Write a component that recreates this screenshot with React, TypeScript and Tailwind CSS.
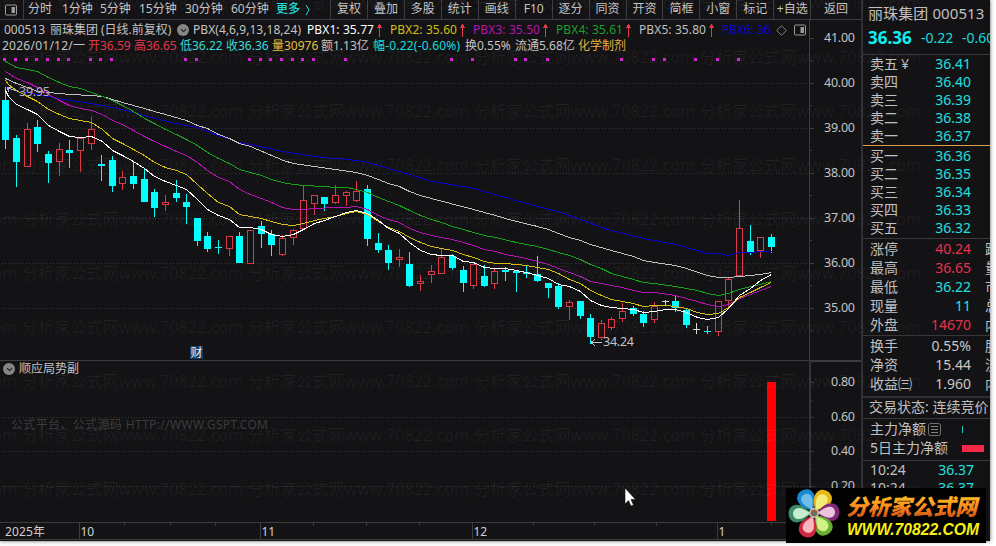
import { ChevronDown } from "lucide-react";

type Kind = "up" | "down" | "flat";
type Candle = [Kind, number, number, number, number];

// kind, high, body top, body bottom, low
const CANDLES: Candle[] = [
  ["down", 86, 100, 140, 149], ["down", 135, 138, 162, 187], ["up", 123, 129, 167, 167], ["down", 120, 127, 144, 152],
  ["down", 151, 154, 163, 183], ["up", 143, 149, 162, 176], ["down", 140, 150, 153, 168], ["up", 137, 138, 151, 172],
  ["up", 117, 129, 144, 150], ["down", 155, 164, 166, 181], ["down", 156, 160, 186, 192], ["up", 171, 177, 184, 190],
  ["down", 161, 176, 184, 189], ["down", 168, 179, 202, 202], ["down", 189, 192, 208, 217], ["up", 195, 202, 205, 211],
  ["down", 180, 193, 198, 202], ["down", 194, 202, 207, 224], ["down", 218, 218, 241, 246], ["down", 232, 236, 249, 252],
  ["down", 240, 247, 248, 254], ["up", 236, 236, 249, 256], ["down", 232, 236, 263, 263], ["up", 230, 230, 264, 264],
  ["down", 221, 226, 234, 248], ["down", 230, 234, 245, 256], ["up", 235, 238, 255, 256], ["up", 229, 230, 238, 245],
  ["up", 186, 200, 229, 229], ["up", 195, 195, 204, 215], ["down", 197, 197, 204, 211], ["up", 185, 195, 203, 204],
  ["up", 191, 192, 196, 206], ["up", 181, 191, 201, 202], ["down", 185, 189, 239, 246], ["down", 233, 243, 250, 253],
  ["down", 245, 250, 263, 270], ["up", 249, 257, 260, 267], ["down", 252, 264, 286, 287], ["up", 275, 281, 284, 291],
  ["up", 265, 271, 275, 283], ["up", 248, 257, 274, 274], ["down", 254, 256, 268, 270], ["down", 266, 270, 283, 292],
  ["up", 264, 264, 286, 289], ["down", 265, 276, 286, 287], ["up", 268, 271, 284, 289], ["down", 267, 270, 272, 281],
  ["down", 270, 271, 273, 292], ["down", 266, 272, 274, 278], ["down", 256, 274, 281, 282], ["down", 283, 283, 288, 298],
  ["down", 283, 286, 307, 309], ["up", 300, 302, 307, 320], ["down", 301, 301, 316, 319], ["down", 314, 318, 337, 344],
  ["up", 320, 323, 338, 340], ["up", 317, 319, 328, 330], ["up", 303, 311, 319, 322], ["down", 306, 308, 314, 316],
  ["down", 311, 314, 323, 327], ["up", 302, 306, 320, 323], ["flat", 300, 301, 302, 305], ["down", 295, 301, 308, 312],
  ["down", 308, 310, 325, 328], ["flat", 323, 329, 330, 334], ["down", 326, 331, 332, 334], ["up", 301, 301, 332, 336],
  ["up", 277, 279, 301, 307], ["up", 200, 228, 276, 276], ["down", 225, 241, 252, 255], ["up", 237, 237, 251, 258],
  ["down", 234, 237, 247, 253],
];

const LINES = [
  { color: "#0a00d0", points: "5,86 10,89 20,91 37,94 48,96 69,100 91,103 112,107 133,112 154,118 176,123 197,127 218,135 239,142 250,144 282,151 314,156 335,158 357,160 367,162 378,165 388,168 409,174 431,181 450,184 473,188 505,197 537,206 560,212 583,220 601,227 611,230 643,238 675,244 697,250 707,253 718,253 728,255 739,252 771,251" },
  { color: "#c0c0c0", points: "5,78 16,83 27,87 37,91 48,92 59,93 69,94 91,95 102,96 112,99 122,102 133,105 144,108 154,111 165,114 186,120 197,125 207,128 218,134 229,138 239,143 250,146 283,160 293,163 314,166 335,169 356,172 367,175 378,179 388,183 399,186 409,191 420,195 431,198 450,203 473,209 495,215 512,220 537,226 548,229 558,233 569,237 580,240 590,244 611,250 633,256 643,260 654,262 675,265 686,268 707,275 718,277 728,277 739,276 750,275 760,274 771,272" },
  { color: "#18a018", points: "5,61 16,67 27,69 37,71 48,77 59,82 69,86 80,88 91,92 102,96 112,100 122,105 133,111 144,118 154,123 165,129 176,134 186,139 197,145 207,152 218,158 229,163 239,169 250,172 261,175 271,179 282,182 293,184 303,185 324,186 335,187 346,187 356,189 367,192 378,197 388,201 399,205 409,210 420,215 431,219 441,222 452,226 463,229 473,232 484,235 495,237 516,242 526,244 537,246 548,249 558,252 569,255 580,259 590,264 601,268 611,273 622,276 633,279 643,282 654,283 675,286 686,288 697,290 707,293 718,295 728,293 739,289 750,286 760,284 771,281" },
  { color: "#b414b4", points: "5,71 16,78 27,82 37,87 48,94 59,100 69,105 80,108 91,110 102,114 112,120 122,124 133,130 144,136 154,141 165,146 176,151 186,155 197,162 207,170 218,177 229,181 239,189 250,194 261,198 271,202 282,207 293,209 303,209 314,208 335,207 346,207 356,206 367,209 378,215 388,219 399,222 409,228 420,232 431,235 441,237 452,239 463,242 473,245 484,249 495,251 505,254 516,256 526,258 537,261 548,264 558,268 569,272 580,276 590,281 601,283 611,285 622,287 633,290 643,292 654,292 675,295 686,298 697,301 707,304 718,306 728,304 739,298 750,294 760,290 771,286" },
  { color: "#d4be10", points: "5,80 8,84 16,90 27,96 37,101 48,109 59,114 69,118 80,120 91,122 102,129 112,138 122,143 133,149 144,155 154,162 165,167 176,170 186,174 197,184 207,193 218,202 229,206 239,214 250,216 261,218 271,221 282,224 293,225 303,223 314,220 324,218 335,216 346,213 356,211 367,214 378,221 388,227 399,231 409,237 420,242 431,246 441,248 452,250 463,254 473,257 484,261 495,263 505,263 516,264 526,265 537,267 548,269 558,273 569,279 580,283 590,290 601,295 611,299 622,301 633,303 643,306 654,305 665,305 675,306 686,308 697,312 707,314 718,313 728,307 739,297 750,292 760,287 771,282" },
  { color: "#ffffff", points: "5,90 8,96 16,104 27,109 37,114 48,125 59,131 69,136 80,137 91,136 102,141 112,150 122,155 133,161 144,168 154,176 165,181 176,185 186,189 197,199 207,209 218,215 229,219 239,227 250,227 261,229 271,234 282,236 293,234 303,229 314,223 324,220 335,216 346,212 356,210 367,213 378,220 388,228 399,233 409,242 420,250 431,254 441,255 452,255 463,261 473,262 484,267 495,268 505,268 516,270 526,272 537,275 548,278 558,284 569,286 580,291 590,300 601,305 611,307 622,308 633,309 643,312 654,311 665,309 675,309 686,312 697,317 707,319 718,317 728,308 739,295 750,288 760,280 771,274" },
];

const MARKERS = [0, 1, 2, 3, 4, 5, 6, 8, 9, 10, 17, 18, 23, 24, 25, 26, 27, 28, 29, 32, 42, 44, 48, 49, 51, 58, 61, 62, 65, 67, 69];

const PERIODS = [
  ["分时", "w-[34px]"], ["1分钟", "w-[38px]"], ["5分钟", "w-[39px]"], ["15分钟", "w-[46px]"],
  ["30分钟", "w-[46px]"], ["60分钟", "w-[45px]"],
];

const ACTIONS = ["复权", "叠加", "多股", "统计", "画线", "F10", "逐分", "同资", "开资", "简框", "小窗", "标记", "+自选"];

const INDICATORS = [
  ["PBX1: 35.77", "text-white"],
  ["PBX2: 35.60", "text-[#d0c018]"],
  ["PBX3: 35.50", "text-[#b414b4]"],
  ["PBX4: 35.61", "text-[#1ca02c]"],
  ["PBX5: 35.80", "text-[#c0c0c0]"],
];

const QUOTE = [
  ["2026/01/12/一", "w-[86px] tracking-[0.25px] text-[#c4c4c4]"],
  ["开36.59", "w-[46px] text-[#e0384c]"],
  ["高36.65", "w-[46px] text-[#e0384c]"],
  ["低36.22", "w-[46px] text-[#38dcdc]"],
  ["收36.36", "w-[46px] text-[#38dcdc]"],
  ["量30976", "w-[49px] text-[#e8c040]"],
  ["额1.13亿", "w-[52px] text-[#c4c4c4]"],
  ["幅-0.22(-0.60%)", "w-[92px] tracking-[0.2px] text-[#18dcdc]"],
  ["换0.55%", "w-[50px] text-[#c4c4c4]"],
  ["流通5.68亿", "w-[63px] text-[#c4c4c4]"],
  ["化学制剂", "text-[#e8b040]"],
];

const ASKS = [["卖五", "36.41"], ["卖四", "36.40"], ["卖三", "36.39"], ["卖二", "36.38"], ["卖一", "36.37"]];
const BIDS = [["买一", "36.36"], ["买二", "36.35"], ["买三", "36.34"], ["买四", "36.33"], ["买五", "36.32"]];

const STATS = [
  ["涨停", "40.24", "跌", "text-[#e8304c]"],
  ["最高", "36.65", "量", "text-[#e8304c]"],
  ["最低", "36.22", "市", "text-[#20e0e0]"],
  ["现量", "11", "总", "text-[#20e0e0]"],
  ["外盘", "14670", "内", "text-[#e8304c]"],
];

const FUNDAMENTALS = [
  ["换手", "0.55%", "股", "text-[#c8c8c8]"],
  ["净资", "15.44", "流", "text-[#c8c8c8]"],
  ["收益㈢", "1.960", "内", "text-[#c8c8c8]"],
];

const barX = (i: number) => Math.ceil(5 + i * 10.63);

function PanelIcon() {
  return (
    <svg width="12" height="12" viewBox="0 0 12 12" className="shrink-0">
      <rect x="0.5" y="1" width="11" height="10" rx="1" fill="none" stroke="#9a9a9a" />
      <rect x="6.5" y="3" width="3.5" height="6" fill="#9a9a9a" />
    </svg>
  );
}

function Badge() {
  return (
    <span className="flex size-[12px] shrink-0 items-center justify-center rounded-full bg-[#868686]">
      <ChevronDown size={9} strokeWidth={3} color="#202022" />
    </span>
  );
}

function Toolbar() {
  return (
    <div className="flex h-5 shrink-0 items-center border-b border-[#3c3c40] text-[12px] text-[#c4c4c4]">
      <div className="flex h-full w-6 shrink-0 items-center border-r border-[#3c3c40] pl-[5px]">
        <PanelIcon />
      </div>
      <div className="flex w-[306px] shrink-0 pb-[2px] pl-[4px]">
        {PERIODS.map(([label, width]) => (
          <span key={label} className={`${width} shrink-0`}>{label}</span>
        ))}
        <span className="font-medium text-[#20dcdc]">更多</span>
        <svg width="6" height="12" viewBox="0 0 6 12" className="mt-[4px] ml-[5px]">
          <path d="M1 1 L4 6 L1 11" fill="none" stroke="#20dcdc" />
        </svg>
      </div>
      {ACTIONS.map((label) => (
        <span key={label} className="flex h-full w-[36.95px] shrink-0 items-center justify-center border-l border-[#3c3c40] pb-[2px] whitespace-nowrap">
          {label}
        </span>
      ))}
      <span className="flex h-full flex-1 items-center justify-center border-l border-[#3c3c40] pb-[2px]">返回</span>
    </div>
  );
}

function PriceChart() {
  return (
    <svg width="810" height="340" viewBox="0 20 810 340" shapeRendering="crispEdges" className="col-start-1 row-start-1">
      {[83, 128, 173, 218, 263, 308].map((y) => (
        <line key={y} x1="2" x2="809" y1={y + 0.5} y2={y + 0.5} stroke="#363638" strokeDasharray="1 2" />
      ))}
      {MARKERS.map((i) => (
        <rect key={i} x={barX(i) - 2} y="58" width="3" height="3" fill="#d820d8" />
      ))}
      {CANDLES.map(([kind, high, top, bottom, low], i) => {
        const x = barX(i);
        const color = kind === "up" ? "#dc3848" : kind === "down" ? "#00ffff" : "#d8d8d8";
        const doji = bottom - top <= 1;
        return (
          <g key={i} fill={color}>
            <rect x={x} y={high} width="1" height={Math.max(top - high, 0)} />
            <rect x={x} y={bottom} width="1" height={Math.max(low - bottom, 0)} />
            {kind === "up" ? (
              <rect x={x - 2.5} y={top + 0.5} width="6" height={bottom - top - 1} fill="none" stroke={color} />
            ) : (
              <rect x={x - 3} y={top} width="7" height={doji ? 1 : bottom - top} />
            )}
          </g>
        );
      })}
      {LINES.map((line) => (
        <polyline key={line.color} points={line.points} fill="none" stroke={line.color} transform="translate(0.5 0.5)" />
      ))}
      <path d="M7 87.5 L18 91.5 M7 87.5 h5 M7 87.5 l2 4" stroke="#b8b8c8" fill="none" />
      <text x="19" y="96" fontSize="12.5" fill="#b0b0c0" textLength="31">39.95</text>
      <path d="M591 342.5 h11 M591 342.5 l4 -3 M591 342.5 l4 3" stroke="#c4c4c4" fill="none" />
      <text x="603" y="346" fontSize="12.5" fill="#c4c4c4" textLength="31">34.24</text>
      <rect x="190" y="346" width="13" height="13" fill="#103c68" />
      <text x="190.5" y="357" fontSize="12" fill="#f0f0f0">财</text>
    </svg>
  );
}

function PriceAxis() {
  return (
    <svg width="51" height="340" viewBox="810 20 51 340" shapeRendering="crispEdges">
      {["41.00", "40.00", "39.00", "38.00", "37.00", "36.00", "35.00"].map((label, i) => (
        <g key={label}>
          <rect x="810" y={38 + i * 45} width="4" height="1" fill="#3c3c40" />
          <rect x="810" y={60 + i * 45} width="2" height="1" fill="#3c3c40" />
          <text x="824" y={42 + i * 45} fontSize="12.5" fill="#c4c4c4" textLength="31">{label}</text>
        </g>
      ))}
    </svg>
  );
}

function MainPane() {
  return (
    <div className="flex h-[341px] shrink-0 border-b border-[#3c3c40]">
      <div className="grid w-[810px] shrink-0 border-r border-[#3c3c40]">
        <PriceChart />
        <div className="col-start-1 row-start-1 overflow-hidden text-[12px] leading-[16px] whitespace-nowrap">
          <div className="flex items-center pt-[2px] pl-[4px] text-[#c4c4c4]">
            <span className="w-[46px] shrink-0">000513</span>
            <span className="w-[127px] shrink-0">丽珠集团<span className="ml-[3px]">(日线.前复权)</span></span>
            <Badge />
            <span className="ml-[4px] w-[114px] shrink-0 tracking-[0.05px]">PBX(4,6,9,13,18,24)</span>
            {INDICATORS.map(([label, color]) => (
              <span key={label} className={`flex w-[83px] shrink-0 items-center ${color}`}>
                <span className="w-[69px] shrink-0 tracking-[0.1px]">{label}</span>
                <svg width="7" height="14" viewBox="0 0 7 14" shapeRendering="crispEdges" className="shrink-0">
                  <path d="M3 1 h1 v13 h-1 Z M3 1 h1 v1 h1 v2 h1 v1 h-5 v-1 h1 v-2 h1 Z" fill="#e0384c" />
                </svg>
              </span>
            ))}
            <span className="w-[54px] shrink-0 overflow-hidden tracking-[-0.1px] text-[#0c04d8]">PBX6: 36.</span>
            <svg width="11" height="11" viewBox="0 0 11 11" className="shrink-0">
              <path d="M5.5 0.7 L10.3 5.5 L5.5 10.3 L0.7 5.5 Z" fill="none" stroke="#848484" />
            </svg>
            <span className="ml-[7px]"><PanelIcon /></span>
          </div>
          <div className="flex pl-[2px]">
            {QUOTE.map(([label, style]) => (
              <span key={label} className={`shrink-0 ${style}`}>{label}</span>
            ))}
          </div>
        </div>
      </div>
      <PriceAxis />
    </div>
  );
}

function SubPane() {
  return (
    <div className="flex h-[162px] shrink-0 border-b border-[#3c3c40]">
      <div className="grid w-[811px] shrink-0 border-r-2 border-[#343439]">
        <svg width="809" height="161" viewBox="0 361 809 161" shapeRendering="crispEdges" className="col-start-1 row-start-1">
          {[417, 451, 486].map((y) => (
            <line key={y} x1="2" x2="809" y1={y + 0.5} y2={y + 0.5} stroke="#363638" strokeDasharray="1 2" />
          ))}
          <rect x="767" y="382" width="9" height="139" fill="#ff0000" />
          <text x="11" y="429" fontSize="12" fill="#3c3c3c" textLength="257">公式平台、公式源码 HTTP://WWW.GSPT.COM</text>
        </svg>
        <div className="col-start-1 row-start-1 flex h-4 items-center gap-1 pl-[3px] text-[12px] text-[#c4c4c4]">
          <Badge />
          <span>顺应局势副</span>
        </div>
      </div>
      <svg width="50" height="161" viewBox="811 361 50 161" shapeRendering="crispEdges">
        <rect x="811" y="361" width="50" height="1" fill="#3c3c40" />
        {["0.80", "0.60", "0.40", "0.20"].map((label, i) => (
          <g key={label}>
            <rect x="811" y={382 + Math.round(i * 34.7)} width="3" height="1" fill="#3c3c40" />
            <rect x="811" y={400 + Math.round(i * 34.7)} width="1" height="1" fill="#3c3c40" />
            <text x="831" y={386 + Math.round(i * 34.7)} fontSize="12.5" fill="#c4c4c4" textLength="24">{label}</text>
          </g>
        ))}
      </svg>
    </div>
  );
}

function TimeAxis() {
  return (
    <svg width="861" height="17" viewBox="0 523 861 17" shapeRendering="crispEdges" className="shrink-0">
      {[79, 260, 472, 717].map((x) => (
        <rect key={x} x={x} y="523" width="1" height="16" fill="#3c3c40" />
      ))}
      {[124, 170, 215, 313, 366, 419, 533, 594, 656, 771].map((x) => (
        <rect key={x} x={x} y="523" width="1" height="3" fill="#3c3c40" />
      ))}
      <rect x="0" y="539" width="861" height="1" fill="#3c3c40" />
      <g fontSize="12" fill="#d0d0d0">
        <text x="5" y="536" textLength="40">2025年</text>
        <text x="80.5" y="536">10</text>
        <text x="261.5" y="536">11</text>
        <text x="473.5" y="536">12</text>
        <text x="718.5" y="536">1</text>
      </g>
    </svg>
  );
}

function StatRow({ label, value, extra, color }: { label: string; value: string; extra: string; color: string }) {
  return (
    <div className="flex h-[19px] items-center pl-[7px] whitespace-nowrap">
      <span className="w-[42px] shrink-0">{label}</span>
      <span className={`w-[59px] shrink-0 text-right ${color}`}>{value}</span>
      <span className="ml-[14px] shrink-0">{extra}</span>
    </div>
  );
}

function OrderRow({ label, value }: { label: string; value: string }) {
  return (
    <div className="flex h-[18px] items-center pl-[7px] whitespace-nowrap">
      <span className="w-[42px] shrink-0">
        {label}
        {label === "卖五" && <span className="ml-[3px]">¥</span>}
      </span>
      <span className="w-[59px] shrink-0 text-right text-[#20e0e0]">{value}</span>
    </div>
  );
}

function SidePanel() {
  return (
    <aside className="flex w-[129px] shrink-0 flex-col overflow-hidden border-l-2 border-[#303034] text-[14px] leading-[18px] text-[#c0c0c0]">
      <div className="h-[55px] shrink-0 border-b border-[#38383c] pl-[5px] whitespace-nowrap">
        <div className="pt-[4px] text-[15px] tracking-[0.1px]">丽珠集团 000513</div>
        <div className="mt-[7px] flex items-center text-[#18dcdc]">
          <span className="w-[53px] shrink-0 text-[17px] font-bold text-[#10f0f0]">36.36</span>
          <span className="w-[41px] shrink-0">-0.22</span>
          <span className="shrink-0">-0.60%</span>
        </div>
      </div>
      <div className="h-[91px] shrink-0 border-b border-[#e09c48]">
        {ASKS.map(([label, value]) => <OrderRow key={label} label={label} value={value} />)}
      </div>
      <div className="h-[93px] shrink-0 border-b border-[#38383c] pt-[1px]">
        {BIDS.map(([label, value]) => <OrderRow key={label} label={label} value={value} />)}
      </div>
      <div className="h-[97px] shrink-0 border-b border-[#38383c]">
        {STATS.map(([label, value, extra, color]) => (
          <StatRow key={label} label={label} value={value} extra={extra} color={color} />
        ))}
      </div>
      <div className="h-[62px] shrink-0 border-b-2 border-[#303034]">
        {FUNDAMENTALS.map(([label, value, extra, color]) => (
          <StatRow key={label} label={label} value={value} extra={extra} color={color} />
        ))}
      </div>
      <div className="h-[21px] shrink-0 border-b border-[#38383c] pl-[6px] text-[14px] whitespace-nowrap">
        交易状态: 连续竞价
      </div>
      <div className="h-[42px] shrink-0 border-b border-[#38383c] pt-[1px] pl-[7px]">
        <div className="flex h-[18px] items-center">
          <span className="w-[58px] shrink-0">主力净额</span>
          <svg width="13" height="13" viewBox="0 0 13 13" className="shrink-0">
            <rect x="0.5" y="0.5" width="12" height="12" rx="2" fill="none" stroke="#707070" />
            <path d="M3 3.5 h7 M3 6.5 h7 M3 9.5 h7" stroke="#808080" />
          </svg>
          <span className="ml-[21px] h-[7px] w-px shrink-0 bg-[#20c8c8]" />
        </div>
        <div className="flex h-[20px] items-center">
          <span className="w-[92px] shrink-0">5日主力净额</span>
          <span className="h-[7px] w-[22px] shrink-0 bg-[#f82848]" />
        </div>
      </div>
      {["a", "b", "c", "d"].map((id) => (
        <div key={id} className="flex h-[18px] shrink-0 items-center pl-[7px]">
          <span className="w-[60px] shrink-0">10:24</span>
          <span className="w-[44px] shrink-0 text-right text-[#20e0e0]">36.37</span>
        </div>
      ))}
    </aside>
  );
}

function Watermark() {
  return (
    <svg width="990" height="540" className="pointer-events-none absolute top-0 left-0">
      {Array.from({ length: 10 }, (_, row) =>
        [-204, 22, 248, 474, 700].map((x) => (
          <text key={`${row}-${x}`} x={x} y={63 + (row - 1) * 54} fontSize="16" fill="#ffffff" fillOpacity="0.06" textLength="221">
            分析家公式网www.70822.com
          </text>
        ))
      )}
    </svg>
  );
}

const PETALS = [
  { angle: -28, outer: "#1888d0", inner: "#70bcec" },
  { angle: 32, outer: "#e8b818", inner: "#f4ec78" },
  { angle: 87, outer: "#802878", inner: "#ecc4dc" },
  { angle: 145, outer: "#68b030", inner: "#d0f088" },
  { angle: 202, outer: "#d02840", inner: "#f8b8c0" },
  { angle: 268, outer: "#3c8c68", inner: "#c8ecd0" },
];

function Logo() {
  return (
    <svg width="200" height="55" viewBox="0 0 200 55" className="absolute top-[488px] left-[786px] bg-[#020202]">
      <defs>
        <linearGradient id="gold" x1="0" y1="0" x2="0" y2="1">
          <stop offset="0.15" stopColor="#ffc020" />
          <stop offset="0.55" stopColor="#f88820" />
          <stop offset="0.9" stopColor="#c85010" />
        </linearGradient>
      </defs>
      {PETALS.map((petal) => (
        <g key={petal.angle} transform={`translate(28 25) rotate(${petal.angle})`}>
          <path d="M0 -3 C-5 -7 -11 -14 -8 -21 C-5 -27 5 -27 8 -21 C11 -14 5 -7 0 -3 Z" fill={petal.outer} />
          <path d="M0 -4 C-3 -8 -7 -14 -5 -18 C-3 -22 3 -22 5 -18 C7 -14 3 -8 0 -4 Z" fill={petal.inner} />
        </g>
      ))}
      <circle cx="28" cy="25" r="5" fill="#c8d0b8" />
      <circle cx="28" cy="25" r="3.5" fill="#9c6040" />
      <circle cx="29" cy="26" r="1.5" fill="#3080a0" />
      <text x="60" y="27" fontSize="22" fontWeight="900" fontStyle="italic" fill="url(#gold)" textLength="131">分析家公式网</text>
      <text x="61" y="47" className="font-['Liberation_Sans']" fontSize="16.5" fontWeight="700" fontStyle="italic" fill="#f8f010" textLength="132" lengthAdjust="spacingAndGlyphs">
        WWW.70822.COM
      </text>
    </svg>
  );
}

export default function App() {
  return (
    <div className="relative h-[546px] w-[996px] overflow-hidden bg-white font-['Noto_Sans','Noto_Sans_CJK_SC',sans-serif]">
      <div className="flex h-[541px] w-[990px] overflow-hidden bg-[#131214] shadow-[0_0_4px_#606060]">
        <div className="flex w-[861px] shrink-0 flex-col">
          <Toolbar />
          <MainPane />
          <SubPane />
          <TimeAxis />
        </div>
        <SidePanel />
      </div>
      <Watermark />
      <svg width="12" height="20" viewBox="0 0 12 20" className="absolute top-[487px] left-[624px]">
        <path d="M1 1 V17 L4.5 13.5 L7 19 L9.5 18 L7 12.5 H11.5 Z" fill="#ffffff" stroke="#101010" strokeWidth="0.6" />
      </svg>
      <Logo />
    </div>
  );
}
